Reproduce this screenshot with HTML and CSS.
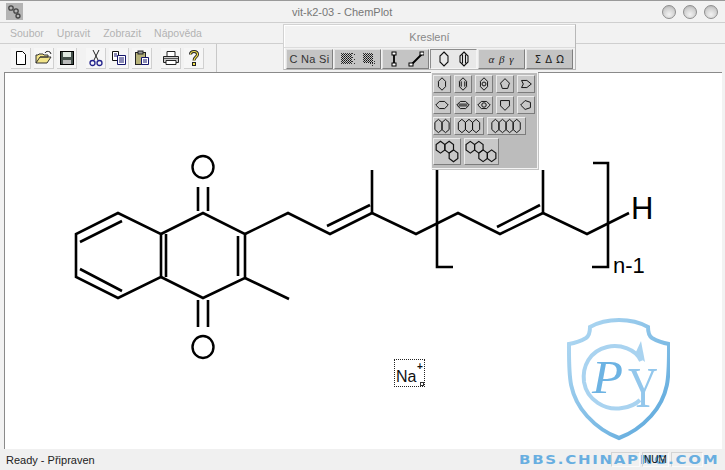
FILE: index.html
```html
<!DOCTYPE html>
<html lang="cs">
<head>
<meta charset="utf-8">
<title>vit-k2-03 - ChemPlot</title>
<link rel="stylesheet" href="styles.css">
</head>
<body>
<svg class="defs" width="0" height="0" aria-hidden="true">
  <defs>
    <polygon id="hv" points="9,2 13,6 13,12 9,16 5,12 5,6"/>
    <linearGradient id="shield" x1="0" y1="0" x2="1" y2="1">
      <stop offset="0" stop-color="#b4daf3"/>
      <stop offset="1" stop-color="#58a6db"/>
    </linearGradient>
    <pattern id="chk" width="2" height="2" patternUnits="userSpaceOnUse">
      <rect width="2" height="2" fill="#c4c4c4"/>
      <rect width="1" height="1" fill="#111"/>
      <rect x="1" y="1" width="1" height="1" fill="#333"/>
    </pattern>
  </defs>
</svg>
<div class="window">
  <header class="titlebar">
    <svg class="appicon" width="17" height="17" viewBox="0 0 17 17"><rect width="17" height="17" fill="#b4b4b4"/><g fill="none" stroke="#444" stroke-width="1.3"><circle cx="5" cy="5" r="2.2"/><circle cx="10" cy="8" r="2.2"/><circle cx="12" cy="13" r="2"/></g></svg>
    <span class="title">vit-k2-03 - ChemPlot</span>
    <div class="winbtns"><i class="winbtn"></i><i class="winbtn"></i><i class="winbtn"></i></div>
  </header>
  <nav class="menubar">
    <span>Soubor</span><span>Upravit</span><span>Zobrazit</span><span>Nápověda</span>
  </nav>
  <div class="toolbar">
    <div class="tgroup">
      <button class="tb"><svg width="16" height="16" viewBox="0 0 16 16"><path d="M3.5 1.5h6l3 3v10h-9z" fill="#fff" stroke="#000"/></svg></button>
      <button class="tb"><svg width="18" height="16" viewBox="0 0 18 16"><path d="M1 13V5h2l1-1h4l1 1h4v2H5L1 13h11l4-6H5" fill="#f3e58a" stroke="#333"/><path d="M10 3c1-2 3-2 5-1l1 2" fill="none" stroke="#222"/></svg></button>
      <button class="tb"><svg width="16" height="16" viewBox="0 0 16 16"><rect x="1.5" y="1.5" width="13" height="13" fill="#44504a" stroke="#000"/><rect x="4" y="2" width="8" height="5" fill="#dfe8e0"/><rect x="4" y="10" width="8" height="4" fill="#bbb"/></svg></button>
    </div>
    <div class="tgroup">
      <button class="tb"><svg width="16" height="18" viewBox="0 0 16 18"><path d="M5 1l5 10M11 1L6 11" stroke="#222" fill="none"/><circle cx="4.5" cy="14" r="2.5" fill="none" stroke="#23238c" stroke-width="1.3"/><circle cx="11.5" cy="14" r="2.5" fill="none" stroke="#23238c" stroke-width="1.3"/></svg></button>
      <button class="tb"><svg width="16" height="16" viewBox="0 0 16 16"><path d="M1.5 1.5h6v9h-6z" fill="#fff" stroke="#111"/><path d="M6.5 5.5h8v9h-8z" fill="#fff" stroke="#15156c"/><path d="M8 8h5M8 10h5M8 12h5M3 4h3M3 6h3" stroke="#15156c"/></svg></button>
      <button class="tb"><svg width="16" height="16" viewBox="0 0 16 16"><rect x="1.5" y="2.5" width="10" height="12" fill="#b6b27a" stroke="#222"/><rect x="4" y="1" width="5" height="3" fill="#999" stroke="#222"/><path d="M7.5 7.5h7v7h-7z" fill="#fff" stroke="#15156c"/><path d="M9 10h4M9 12h4" stroke="#15156c"/></svg></button>
    </div>
    <div class="tgroup">
      <button class="tb"><svg width="18" height="16" viewBox="0 0 18 16"><path d="M5 6V1.5h8V6" fill="#fff" stroke="#222"/><path d="M1.5 6.5h15v6h-15z" fill="#ccc" stroke="#222"/><path d="M4 10.5h10v4H4z" fill="#fff" stroke="#222"/><path d="M2 8.500h14" stroke="#555"/></svg></button>
      <button class="tb"><svg width="14" height="18" viewBox="0 0 14 18"><path d="M3.500 5.500c0-4 7-4 7 0 0 2.500-3.500 2.500-3.500 6" fill="none" stroke="#222" stroke-width="3"/><path d="M3.500 5.500c0-4 7-4 7 0 0 2.500-3.500 2.500-3.500 6" fill="none" stroke="#f4e24c" stroke-width="1.200"/><rect x="5.500" y="13.500" width="3" height="3" fill="#f4e24c" stroke="#222"/></svg></button>
    </div>
  </div>
  <main class="canvas">
    <svg class="molecule" width="718" height="377" viewBox="4 72 718 377">
      <g class="bonds">
        <polygon points="118,213 76,234 76,277 118,298 161,277 161,234"/>
        <polyline points="161,234 203,213 245,234 245,278 203,298 161,277"/>
        <path d="M122,221 L80,242 M80,269 L122,291 M166,234 V277 M238,236 V276"/>
        <path d="M198,187 V211 M208,187 V211 M198,300 V327 M208,300 V327"/>
        <polyline points="245,234 288,213 330,234 372,213 416,234 458,213 500,234 543,213 587,234 629,213"/>
        <path d="M245,278 L289,299 M327,226 L370,205 M372,170 V213 M497,227 L540,205 M543,170 V213"/>
        <path d="M453,267 H437 V160 M593,163 H608 V267 H592"/>
      </g>
      <ellipse class="oxygen" cx="203" cy="167" rx="10.500" ry="11"/>
      <ellipse class="oxygen" cx="203" cy="347" rx="10.500" ry="11"/>
      <text class="atom" x="631" y="219">H</text>
      <text class="index" x="613" y="273">n-1</text>
    </svg>
    <div class="na-box"><span class="na">Na</span><span class="plus">+</span><i class="handle"></i></div>
  </main>
  <footer class="statusbar">
    <span class="ready">Ready - Připraven</span>
    <div class="panels"><span class="panel p1"></span><span class="panel p2">NUM</span><span class="panel p3"></span></div>
  </footer>
</div>

<section class="palette">
  <div class="palette-title">Kreslení</div>
  <div class="palette-row">
    <button class="pb pb-text">C Na Si</button>
    <button class="pb"><svg width="36" height="14" viewBox="0 0 36 14"><rect x="1" y="1" width="11" height="11" fill="url(#chk)"/><rect x="12" y="1" width="1" height="1" class="dark"/><rect x="14" y="2" width="1" height="1" class="dark"/><rect x="12" y="5" width="1" height="1" class="dark"/><rect x="14" y="7" width="1" height="1" class="dark"/><rect x="12" y="9" width="1" height="1" class="dark"/><rect x="14" y="11" width="1" height="1" class="dark"/><rect x="23" y="1" width="10" height="10" fill="url(#chk)"/><rect x="30" y="11" width="1" height="1" class="dark"/><rect x="32" y="11" width="1" height="1" class="dark"/><rect x="34" y="11" width="1" height="1" class="dark"/><rect x="34" y="9" width="1" height="1" class="dark"/><rect x="32" y="13" width="1" height="1" class="dark"/></svg></button>
    <button class="pb"><svg width="36" height="16" viewBox="0 0 36 16"><path d="M6 3V13M23 14L34 3" stroke="#000" stroke-width="1.800"/><rect x="4" y="1" width="4" height="3" class="node"/><rect x="4" y="12" width="4" height="3" class="node"/><rect x="21" y="12" width="4" height="3" class="node"/><rect x="32" y="1" width="4" height="3" class="node"/></svg></button>
    <button class="pb pb-active"><svg width="36" height="16" viewBox="0 0 36 16"><polygon class="ring" points="8,1 12,5 12,11 8,15 4,11 4,5"/><polygon class="ring" points="28,1 32,5 32,11 28,15 24,11 24,5"/><path class="ring" d="M26.500,3.500 V12.500 M29.500,3.500 V12.500"/></svg></button>
    <button class="pb greek">α β γ</button>
    <button class="pb greek2">Σ Δ Ω</button>
  </div>
</section>

<section class="rings">
  <div class="rings-row">
    <button class="rb"><svg viewBox="0 0 18 18"><use class="ring" href="#hv"/></svg></button>
    <button class="rb"><svg viewBox="0 0 18 18"><use class="ring" href="#hv"/><path class="ring" d="M7,6V12M11,6V12"/></svg></button>
    <button class="rb"><svg viewBox="0 0 18 18"><use class="ring" href="#hv"/><circle class="ring" cx="9" cy="9" r="2.200"/></svg></button>
    <button class="rb"><svg viewBox="0 0 18 18"><polygon class="ring" points="9,3 14,8 12,14 6,14 4,8"/></svg></button>
    <button class="rb"><svg viewBox="0 0 18 18"><polygon class="ring" points="4,5 10,5 15,9 10,13 4,13 6,9"/></svg></button>
  </div>
  <div class="rings-row">
    <button class="rb"><svg viewBox="0 0 18 18"><polygon class="ring" points="2,9 6,5 12,5 16,9 12,13 6,13"/></svg></button>
    <button class="rb"><svg viewBox="0 0 18 18"><polygon class="ring" points="2,9 6,5 12,5 16,9 12,13 6,13"/><path class="ring" d="M4,8H14M4,10H14"/></svg></button>
    <button class="rb"><svg viewBox="0 0 18 18"><polygon class="ring" points="2,9 6,5 12,5 16,9 12,13 6,13"/><circle class="ring" cx="9" cy="9" r="2.500"/></svg></button>
    <button class="rb"><svg viewBox="0 0 18 18"><polygon class="ring" points="4,4 14,4 14,10 9,15 4,10"/></svg></button>
    <button class="rb"><svg viewBox="0 0 18 18"><polygon class="ring" points="3,9 8,4 14,6 14,12 8,14"/></svg></button>
  </div>
  <div class="rings-row r3">
    <button class="rb"><svg viewBox="0 0 18 18"><polygon class="ring" points="5,1.500 9,5 9,13 5,16.500 1,13 1,5"/><polygon class="ring" points="13,1.500 17,5 17,13 13,16.500 9,13 9,5"/></svg></button>
    <button class="rb w30"><svg viewBox="0 0 30 18"><polygon class="ring" points="7,1.500 11,5 11,13 7,16.500 3,13 3,5"/><polygon class="ring" points="15,1.500 19,5 19,13 15,16.500 11,13 11,5"/><polygon class="ring" points="23,1.500 27,5 27,13 23,16.500 19,13 19,5"/></svg></button>
    <button class="rb w39"><svg viewBox="0 0 39 18"><polygon class="ring" points="7,1.500 11,5 11,13 7,16.500 3,13 3,5"/><polygon class="ring" points="15,1.500 19,5 19,13 15,16.500 11,13 11,5"/><polygon class="ring" points="23,1.500 27,5 27,13 23,16.500 19,13 19,5"/><polygon class="ring" points="31,1.500 35,5 35,13 31,16.500 27,13 27,5"/></svg></button>
  </div>
  <div class="rings-row r4">
    <button class="rb big"><svg viewBox="1 1 24 23"><polygon class="ring" points="7,3 11,6 11,11 7,14 3,11 3,6"/><polygon class="ring" points="15,3 19,6 19,11 15,14 11,11 11,6"/><polygon class="ring" points="19,11 23,14 23,19 19,22 15,19 15,14"/></svg></button>
    <button class="rb big w35"><svg viewBox="1 1 31 23"><polygon class="ring" points="6,3 10,6 10,11 6,14 2,11 2,6"/><polygon class="ring" points="14,3 18,6 18,11 14,14 10,11 10,6"/><polygon class="ring" points="18,11 22,14 22,19 18,22 14,19 14,14"/><polygon class="ring" points="26,11 30,14 30,19 26,22 22,19 22,14"/></svg></button>
  </div>
</section>

<aside class="watermark">
  <svg width="104" height="126" viewBox="566 317 104 126">
    <path class="shield" d="M619,320 C607,320 597,323 590,327 C590,332 589,336 586,338 C581,341 575,343 569,344 C569,375 568,395 587,416 C597,427 608,434 619,438 C630,434 641,427 651,416 C670,395 669,375 669,344 C663,343 657,341 652,338 C649,336 648,332 648,327 C641,323 631,320 619,320 Z"/>
    <path class="swirl" d="M641,361 C636,349 620,344 607,347 C590,351 582,366 584,382 C587,400 605,411 622,408 C630,407 636,404 640,400"/>
    <path class="arrow" d="M641,341 L645,362 L635,354 Z"/>
    <text class="wm-p" x="592" y="393" textLength="31" lengthAdjust="spacingAndGlyphs">P</text>
    <text class="wm-y" x="628" y="407" textLength="30" lengthAdjust="spacingAndGlyphs">Y</text>
  </svg>
  <div class="wm-url">BBS.CHINAPNG.COM</div>
</aside>
</body>
</html>
```
FILE: styles.css
```css
* { box-sizing: border-box; }
html, body { margin: 0; padding: 0; }
body {
  position: relative;
  width: 725px;
  height: 470px;
  overflow: hidden;
  font-family: "Liberation Sans", Arial, sans-serif;
  font-size: 11px;
  background: #f2f2f2;
}
.defs { position: absolute; }
button { font: inherit; margin: 0; padding: 0; }

.window {
  display: flex;
  flex-direction: column;
  width: 725px;
  height: 470px;
  border-top: 1px solid #9a9a9a;
}

.titlebar {
  display: flex;
  align-items: center;
  height: 22px;
  padding: 0 7px 0 6px;
  border-bottom: 1px solid #cfcfcf;
  background: #f2f2f2;
  flex: none;
}
.appicon { flex: none; }
.title { margin-left: 269px; color: #777; white-space: nowrap; }
.winbtns { display: flex; gap: 7px; margin-left: auto; }
.winbtn {
  display: block;
  width: 14px;
  height: 14px;
  border-radius: 50%;
  border: 1px solid #8e8e8e;
  background: radial-gradient(circle at 50% 70%, #f2f2f2 0, #cfcfcf 60%, #a8a8a8 100%);
}

.menubar {
  display: flex;
  align-items: center;
  gap: 13px;
  height: 21px;
  padding-left: 10px;
  border-bottom: 1px solid #cfcfcf;
  color: #b2b2b2;
  font-size: 10.5px;
  flex: none;
}

.toolbar {
  display: flex;
  align-items: center;
  gap: 9px;
  width: 217px;
  height: 28px;
  padding-left: 11px;
  border-right: 1px solid #c8c8c8;
  flex: none;
}
.tgroup { display: flex; gap: 3px; }
.tb {
  display: flex;
  align-items: center;
  justify-content: center;
  width: 20px;
  height: 21px;
  border: 0;
  border-right: 1px solid #d0d0d0;
  border-bottom: 1px solid #d0d0d0;
  background: #f6f6f6;
}

.canvas {
  position: relative;
  flex: 1;
  margin: 0 3px 0 4px;
  background: #fff;
  box-shadow: inset 1px 1px 0 #8a8a8a;
  min-height: 0;
}
.molecule { display: block; }
.bonds { fill: none; stroke: #000; stroke-width: 2.6; stroke-linejoin: miter; }
.oxygen { fill: none; stroke: #000; stroke-width: 2.4; }
.atom { font-size: 31px; fill: #000; }
.index { font-size: 22px; fill: #000; }

.na-box {
  position: absolute;
  left: 390px;
  top: 287px;
  width: 31px;
  height: 28px;
  border: 1px dotted #222;
}
.na { position: absolute; left: 1px; top: 8px; font-size: 16px; line-height: 18px; color: #111; }
.plus { position: absolute; left: 22px; top: 1px; font-size: 10px; line-height: 11px; font-weight: bold; color: #111; }
.handle { position: absolute; right: 0; bottom: 0; width: 4px; height: 4px; border: 1px solid #333; background: #fff; }

.statusbar {
  display: flex;
  align-items: center;
  justify-content: space-between;
  height: 21px;
  padding: 0 22px 0 6px;
  background: #f0f0f0;
  color: #222;
  flex: none;
}
.panels { display: flex; gap: 2px; }
.panel {
  display: block;
  height: 15px;
  line-height: 14px;
  border: 1px solid #d4d4d4;
  border-right-color: #fafafa;
  border-bottom-color: #fafafa;
  text-align: center;
  color: #111;
  font-size: 10px;
}
.p1 { width: 29px; }
.p2 { width: 27px; position: relative; z-index: 2; }
.p3 { width: 32px; }

.palette {
  position: absolute;
  left: 283px;
  top: 24px;
  width: 293px;
  height: 46px;
  border: 1px solid #d2d2d2;
  border-right-color: #b8b8b8;
  border-bottom-color: #b8b8b8;
  background: #f2f2f2;
  box-shadow: inset 1px 1px 0 #fff;
}
.palette-title { height: 22px; line-height: 24px; text-align: center; color: #888; }
.palette-row { display: flex; gap: 1px; padding-left: 2px; border-top: 1px solid #dcdcdc; padding-top: 1px; }
.pb {
  display: flex;
  align-items: center;
  justify-content: center;
  width: 47px;
  height: 20px;
  border: 1px solid;
  border-color: #e4e4e4 #808080 #808080 #e4e4e4;
  background: #c4c4c4;
  color: #222;
  font-size: 12px;
  white-space: nowrap;
}
.pb-text { font-size: 11px; color: #333; letter-spacing: .3px; }
.pb-active { background: #e8e8e8; border-color: #8c8c8c #f4f4f4 #f4f4f4 #8c8c8c; }
.greek { font-family: "Liberation Serif", serif; font-style: italic; font-size: 11px; letter-spacing: 1px; }
.greek2 { font-family: "DejaVu Sans", sans-serif; font-size: 10px; letter-spacing: .5px; }
.dark { fill: #333; }
.node { fill: #fff; stroke: #000; }
.ring { fill: none; stroke: #111; stroke-width: 1.1; }

.rings {
  position: absolute;
  left: 431px;
  top: 72px;
  width: 107px;
  height: 97px;
  display: flex;
  flex-direction: column;
  gap: 3px;
  padding: 2px 0 0 1px;
  background: #bcbcbc;
  border: 1px solid #f4f4f4;
  box-shadow: 1px 1px 0 #c4c4c4;
}
.rings-row { display: flex; gap: 3px; }
.rb {
  display: flex;
  width: 18px;
  height: 18px;
  border: 1px solid;
  border-color: #ececec #7c7c7c #7c7c7c #ececec;
  background: #c8c8c8;
  flex: none;
}
.rb svg { width: 100%; height: 100%; display: block; }
.w30 { width: 30px; }
.w39 { width: 39px; }
.big { width: 28px; height: 27px; }
.w35 { width: 35px; }

.watermark {
  position: absolute;
  left: 519px;
  top: 317px;
  width: 206px;
  pointer-events: none;
}
.watermark svg { display: block; margin-left: 47px; }
.shield { fill: #fff; fill-opacity: .4; stroke: url(#shield); stroke-width: 4; }
.swirl { fill: none; stroke: #a9d3f0; stroke-width: 4; }
.arrow { fill: #a9d3f0; }
.wm-p { font-family: "Liberation Serif", serif; font-style: italic; font-size: 46px; fill: #6db3e3; }
.wm-y { font-family: "Liberation Serif", serif; font-size: 58px; fill: #93c7ec; }
.wm-url {
  width: 160px;
  margin-top: 10px;
  font-family: "DejaVu Sans", sans-serif;
  font-weight: bold;
  font-size: 12px;
  line-height: 14px;
  letter-spacing: 1.37px;
  color: #68aee0;
  white-space: nowrap;
  transform: scaleX(1.25);
  transform-origin: left center;
}
```
